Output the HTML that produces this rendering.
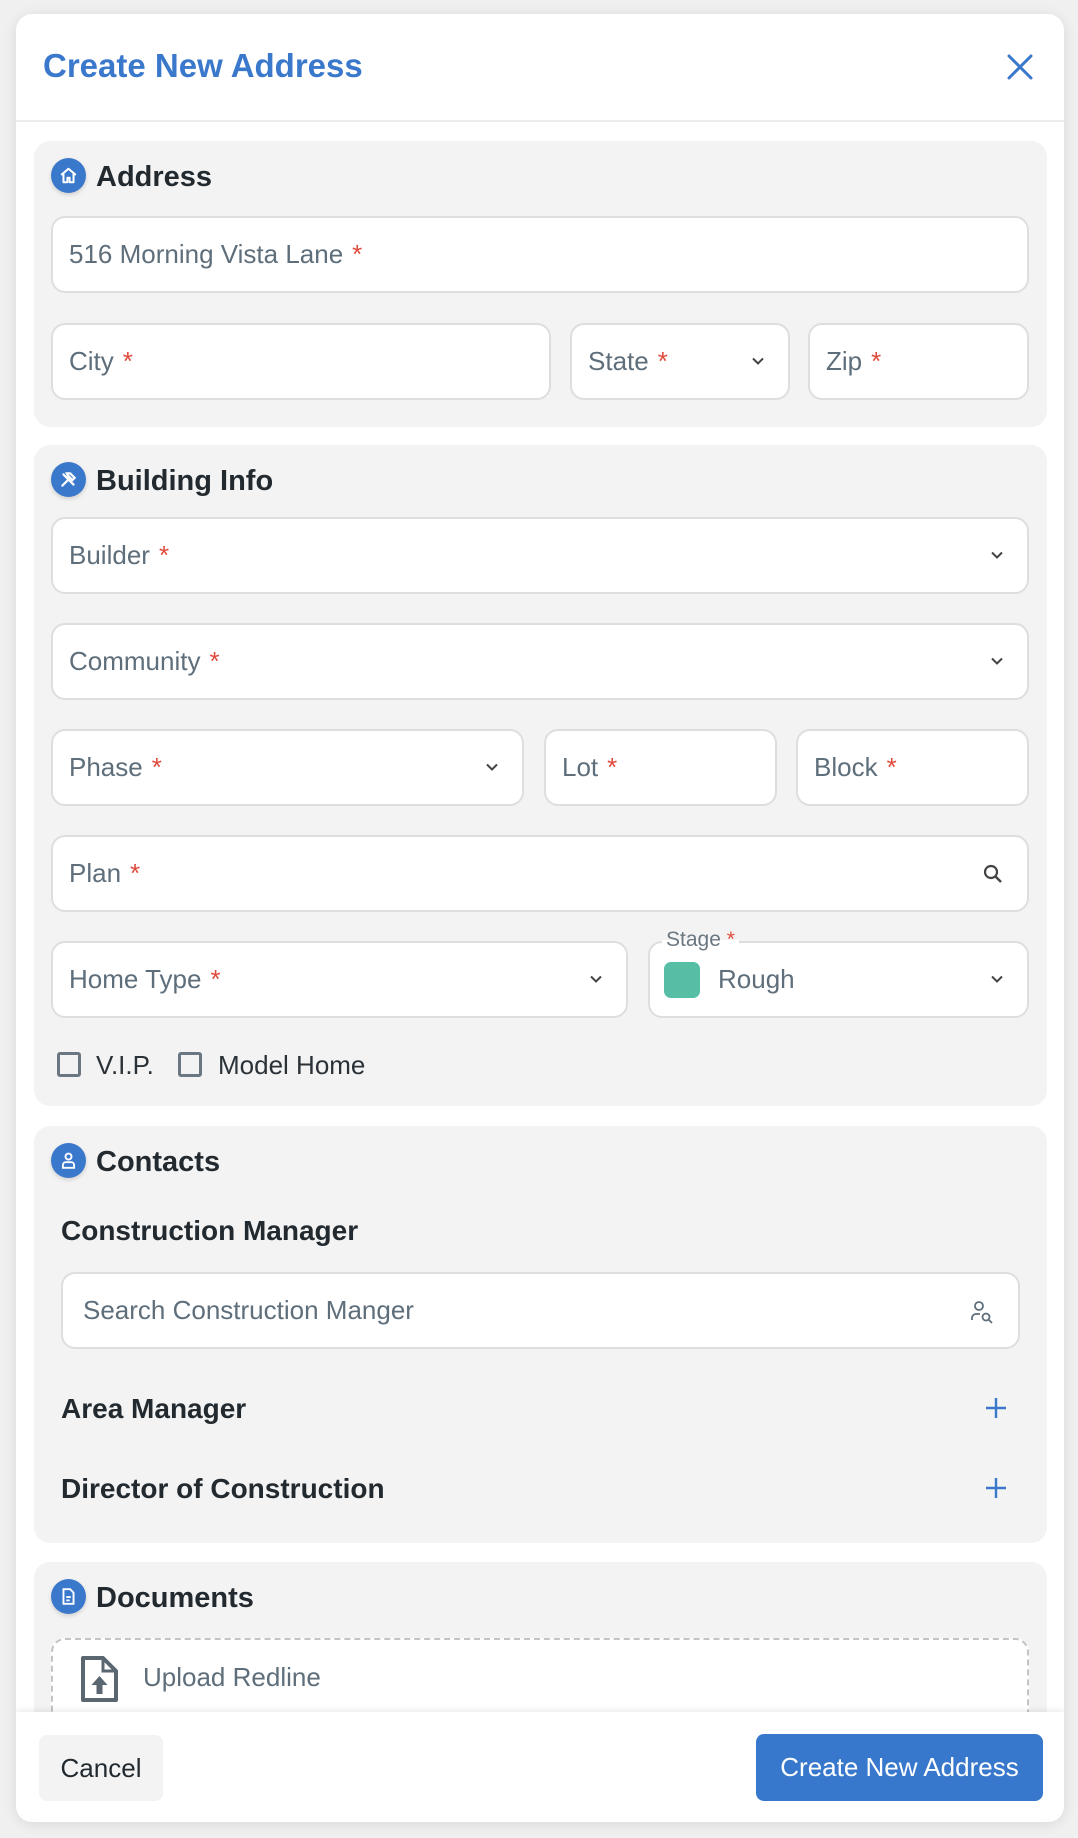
<!DOCTYPE html>
<html><head><meta charset="utf-8"><style>
*{box-sizing:border-box;margin:0;padding:0}
body{width:1078px;height:1838px;background:#f0f0f0;font-family:"Liberation Sans",sans-serif;position:relative;overflow:hidden}
.modal{position:absolute;left:16px;top:14px;width:1048px;height:1808px;background:#fff;border-radius:16px;box-shadow:0 2px 14px rgba(0,0,0,.10);overflow:hidden}
.a{position:absolute}
.title{left:27px;top:33px;font-size:33px;font-weight:bold;color:#3a78cc}
.hline{left:0;top:106px;width:1048px;height:2px;background:#ececec}
.sec{position:absolute;left:18px;width:1013px;background:#f3f3f3;border-radius:16px}
.ic{position:absolute;left:17px;width:35px;height:35px;border-radius:50%;background:#3a78cc;box-shadow:0 2px 4px rgba(0,0,0,.15)}
.ic svg{position:absolute;left:8px;top:8px}
.h{position:absolute;left:62px;font-size:29px;font-weight:bold;color:#222a30}
.in{position:absolute;background:#fff;border:2px solid #dedede;border-radius:14px;height:77px;font-size:26px;color:#5e6e7a;padding-left:16px;line-height:73px}
.in b{color:#e04a3c;font-weight:normal;margin-left:9px}
.chev{position:absolute;right:22px;top:28px}
.sub{position:absolute;font-size:28px;font-weight:bold;color:#222a30}
.cb{position:absolute;width:24px;height:25px;border:3px solid #6a7782;border-radius:3px}
.lbl{position:absolute;font-size:26px;color:#2a3238}
.plus{position:absolute;left:951px}
</style></head><body>
<div class="modal">
  <div class="a title">Create New Address</div>
  <svg class="a" style="left:991px;top:40px" width="26" height="26" viewBox="0 0 26 26"><path d="M2 2L24 24M24 2L2 24" stroke="#3a78cc" stroke-width="3" stroke-linecap="round"/></svg>
  <div class="a hline"></div>

  <!-- Address -->
  <div class="sec" style="top:127px;height:286px">
    <div class="ic" style="top:17px"><svg width="19" height="19" viewBox="0 0 17 17"><path d="M2 8L8.5 2.5 15 8M4 7v7.5h3.5v-4h2v4H13V7" fill="none" stroke="#fff" stroke-width="1.8" stroke-linejoin="round"/></svg></div>
    <div class="h" style="top:20px">Address</div>
    <div class="in" style="left:17px;top:75px;width:978px">516 Morning Vista Lane<b>*</b></div>
    <div class="in" style="left:17px;top:182px;width:500px">City<b>*</b></div>
    <div class="in" style="left:536px;top:182px;width:220px">State<b>*</b><svg class="chev" width="16" height="16" viewBox="0 0 16 16"><path d="M3 5.5l5 5 5-5" fill="none" stroke="#444" stroke-width="2"/></svg></div>
    <div class="in" style="left:774px;top:182px;width:221px">Zip<b>*</b></div>
  </div>

  <!-- Building Info -->
  <div class="sec" style="top:431px;height:661px">
    <div class="ic" style="top:17px"><svg width="19" height="19" viewBox="0 0 17 17"><path d="M3 14L10 7M7 3l3 0 4 4-2 2-4-4zM4 4l9 9" fill="none" stroke="#fff" stroke-width="2" stroke-linecap="round"/></svg></div>
    <div class="h" style="top:20px">Building Info</div>
    <div class="in" style="left:17px;top:72px;width:978px">Builder<b>*</b><svg class="chev" width="16" height="16" viewBox="0 0 16 16"><path d="M3 5.5l5 5 5-5" fill="none" stroke="#444" stroke-width="2"/></svg></div>
    <div class="in" style="left:17px;top:178px;width:978px">Community<b>*</b><svg class="chev" width="16" height="16" viewBox="0 0 16 16"><path d="M3 5.5l5 5 5-5" fill="none" stroke="#444" stroke-width="2"/></svg></div>
    <div class="in" style="left:17px;top:284px;width:473px">Phase<b>*</b><svg class="chev" width="16" height="16" viewBox="0 0 16 16"><path d="M3 5.5l5 5 5-5" fill="none" stroke="#444" stroke-width="2"/></svg></div>
    <div class="in" style="left:510px;top:284px;width:233px">Lot<b>*</b></div>
    <div class="in" style="left:762px;top:284px;width:233px">Block<b>*</b></div>
    <div class="in" style="left:17px;top:390px;width:978px">Plan<b>*</b><svg class="chev" style="top:25px" width="24" height="24" viewBox="0 0 24 24"><circle cx="10" cy="10" r="6" fill="none" stroke="#444" stroke-width="2.2"/><path d="M14.5 14.5L20 20" stroke="#444" stroke-width="2.4"/></svg></div>
    <div class="in" style="left:17px;top:496px;width:577px">Home Type<b>*</b><svg class="chev" width="16" height="16" viewBox="0 0 16 16"><path d="M3 5.5l5 5 5-5" fill="none" stroke="#444" stroke-width="2"/></svg></div>
    <div class="in" style="left:614px;top:496px;width:381px;padding-left:68px">Rough<svg class="chev" width="16" height="16" viewBox="0 0 16 16"><path d="M3 5.5l5 5 5-5" fill="none" stroke="#444" stroke-width="2"/></svg>
      <div class="a" style="left:14px;top:19px;width:36px;height:36px;border-radius:7px;background:#55bea5"></div>
    </div>
    <div class="a" style="left:628px;top:482px;background:linear-gradient(#f3f3f3 50%,#fff 50%);padding:0 4px;font-size:21px;color:#6b7780;line-height:26px">Stage <span style="color:#e04a3c">*</span></div>
    <div class="cb" style="left:23px;top:607px"></div>
    <div class="lbl" style="left:62px;top:605px">V.I.P.</div>
    <div class="cb" style="left:144px;top:607px"></div>
    <div class="lbl" style="left:184px;top:605px">Model Home</div>
  </div>

  <!-- Contacts -->
  <div class="sec" style="top:1112px;height:417px">
    <div class="ic" style="top:17px"><svg width="19" height="19" viewBox="0 0 17 17"><circle cx="8.5" cy="5" r="2.7" fill="none" stroke="#fff" stroke-width="1.7"/><path d="M3.5 15v-2.5a2.5 2.5 0 0 1 2.5-2.5h5a2.5 2.5 0 0 1 2.5 2.5V15z" fill="none" stroke="#fff" stroke-width="1.7"/></svg></div>
    <div class="h" style="top:20px">Contacts</div>
    <div class="sub" style="left:27px;top:89px">Construction Manager</div>
    <div class="in" style="left:27px;top:146px;width:959px;padding-left:20px">Search Construction Manger
      <svg class="chev" style="top:24px" width="28" height="28" viewBox="0 0 28 28"><circle cx="11" cy="8" r="4" fill="none" stroke="#5e6e7a" stroke-width="1.8"/><path d="M4 22v-2a4 4 0 0 1 4-4h4" fill="none" stroke="#5e6e7a" stroke-width="1.8"/><circle cx="18" cy="19" r="3.5" fill="none" stroke="#5e6e7a" stroke-width="1.8"/><path d="M20.5 21.5L24 25" stroke="#5e6e7a" stroke-width="1.8"/></svg></div>
    <div class="sub" style="left:27px;top:267px">Area Manager</div>
    <svg class="plus" style="top:271px" width="22" height="22" viewBox="0 0 22 22"><path d="M11 1v20M1 11h20" stroke="#3a78cc" stroke-width="2.4"/></svg>
    <div class="sub" style="left:27px;top:347px">Director of Construction</div>
    <svg class="plus" style="top:351px" width="22" height="22" viewBox="0 0 22 22"><path d="M11 1v20M1 11h20" stroke="#3a78cc" stroke-width="2.4"/></svg>
  </div>

  <!-- Documents -->
  <div class="sec" style="top:1548px;height:300px">
    <div class="ic" style="top:17px"><svg width="19" height="19" viewBox="0 0 17 17"><path d="M4 2h6l3 3v10H4z" fill="none" stroke="#fff" stroke-width="1.7"/><path d="M6.5 9h4M6.5 12h3" stroke="#fff" stroke-width="1.6"/></svg></div>
    <div class="h" style="top:20px">Documents</div>
    <div class="a" style="left:17px;top:76px;width:978px;height:120px;background:#fff;border:2px dashed #c4c4c4;border-radius:14px">
      <svg class="a" style="left:27px;top:16px" width="40" height="46" viewBox="0 0 40 46"><path d="M3 2h20l13 13v29H3z" fill="none" stroke="#5a6670" stroke-width="4" stroke-linejoin="round"/><path d="M23 2v13h13" fill="none" stroke="#5a6670" stroke-width="3"/><path d="M19.5 20l-8 9h5v9h6v-9h5z" fill="#5a6670"/></svg>
      <div class="a" style="left:90px;top:22px;font-size:26px;color:#5e6e7a">Upload Redline</div>
    </div>
  </div>

  <!-- Footer -->
  <div class="a" style="left:0;top:1698px;width:1048px;height:110px;background:#fff;box-shadow:0 -2px 6px rgba(0,0,0,.08)">
    <div class="a" style="left:23px;top:23px;width:124px;height:66px;border-radius:8px;background:#f3f3f3;font-size:26px;color:#222a30;text-align:center;line-height:66px">Cancel</div>
    <div class="a" style="left:740px;top:22px;width:287px;height:67px;border-radius:8px;background:#3878cc;font-size:26px;color:#fff;text-align:center;line-height:67px">Create New Address</div>
  </div>
</div>
</body></html>
